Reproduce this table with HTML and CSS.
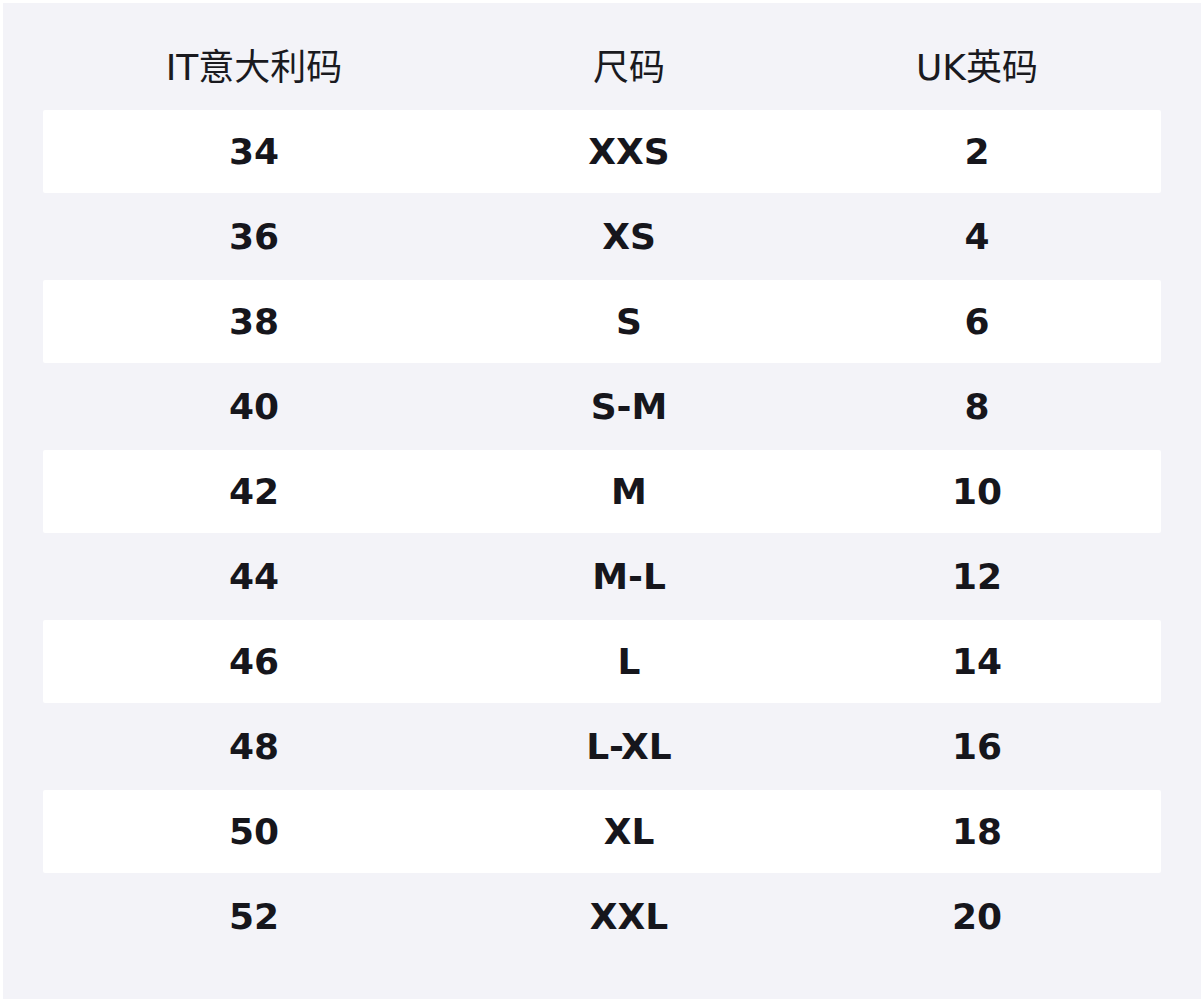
FILE: index.html
```html
<!DOCTYPE html>
<html lang="zh">
<head>
<meta charset="utf-8">
<link rel="stylesheet" href="styles.css">
</head>
<body>
<div class="page">
  <div class="panel">
    <div class="row head">
      <div class="cell">IT意大利码</div>
      <div class="cell">尺码</div>
      <div class="cell">UK英码</div>
    </div>
    <div class="row alt"><div class="cell">34</div><div class="cell">XXS</div><div class="cell">2</div></div>
    <div class="row"><div class="cell">36</div><div class="cell">XS</div><div class="cell">4</div></div>
    <div class="row alt"><div class="cell">38</div><div class="cell">S</div><div class="cell">6</div></div>
    <div class="row"><div class="cell">40</div><div class="cell">S-M</div><div class="cell">8</div></div>
    <div class="row alt"><div class="cell">42</div><div class="cell">M</div><div class="cell">10</div></div>
    <div class="row"><div class="cell">44</div><div class="cell">M-L</div><div class="cell">12</div></div>
    <div class="row alt"><div class="cell">46</div><div class="cell">L</div><div class="cell">14</div></div>
    <div class="row"><div class="cell">48</div><div class="cell">L-XL</div><div class="cell">16</div></div>
    <div class="row alt"><div class="cell">50</div><div class="cell">XL</div><div class="cell">18</div></div>
    <div class="row"><div class="cell">52</div><div class="cell">XXL</div><div class="cell">20</div></div>
  </div>
</div>
</body>
</html>
```
FILE: styles.css
```css
html, body {
  margin: 0;
  padding: 0;
  background: #ffffff;
}
.page {
  padding: 3px 3px 4px 3px;
}
.panel {
  background: #f3f3f8;
  padding: 22px 40px 39px 40px;
  font-family: "DejaVu Sans", "Noto Sans CJK SC", sans-serif;
  color: #16161c;
}
.row {
  display: grid;
  grid-template-columns: 422px 328px 1fr;
  height: 87px;
  align-items: center;
  font-size: 36px;
  line-height: 1;
  font-weight: bold;
}
.row.alt {
  height: 83px;
  background: #ffffff;
  border-radius: 2px;
}
.cell {
  text-align: center;
}
.row.head {
  height: 85px;
  font-weight: normal;
  font-size: 36px;
  color: #1a1a1f;
}
```
